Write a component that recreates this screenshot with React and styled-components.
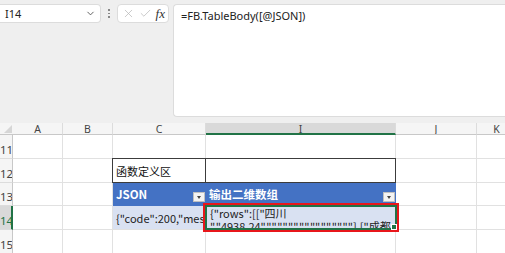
import React from "react";
import styled, { createGlobalStyle } from "styled-components";
import { ChevronDown, X, Check } from "lucide-react";

const GlobalStyle = createGlobalStyle`
  html, body {
    margin: 0;
    padding: 0;
    background: #efefef;
  }
  body {
    font-family: "Noto Sans", "Noto Sans CJK SC", sans-serif;
    overflow: hidden;
  }
`;

const columns = [
  { key: "A", width: 50 },
  { key: "B", width: 50 },
  { key: "C", width: 93 },
  { key: "I", width: 190, active: true },
  { key: "J", width: 81 },
  { key: "K", width: 40 },
];

const rows = [
  { num: 11, height: 24 },
  { num: 12, height: 24 },
  { num: 13, height: 23 },
  { num: 14, height: 24, active: true },
  { num: 15, height: 24 },
];

const App = () => {
  return (
    <Wrapper>
      <GlobalStyle />
      <TopBar>
        <NameBox>
          <span>I14</span>
          <ChevronDown size={11} strokeWidth={2} color="#555" />
        </NameBox>
        <Grip>
          <i />
          <i />
          <i />
        </Grip>
        <FormulaTools>
          <X size={13} strokeWidth={1.3} color="#b5b5b5" />
          <Check size={13} strokeWidth={1.3} color="#b5b5b5" />
          <Fx>fx</Fx>
        </FormulaTools>
        <FormulaBar>=FB.TableBody([@JSON])</FormulaBar>
      </TopBar>

      <Sheet>
        <Corner>
          <svg width="10" height="10" viewBox="0 0 10 10">
            <path d="M9 1 L9 9 L1 9 Z" fill="#d6d6d6" />
          </svg>
        </Corner>
        {columns.map((c) => (
          <ColHeader key={c.key} $active={c.active}>
            {c.key}
          </ColHeader>
        ))}

        {rows.map((r) => (
          <React.Fragment key={r.num}>
            <RowHeader $active={r.active} $h={r.height}>
              {r.num}
            </RowHeader>
            <Cell />
            <Cell />
            {r.num === 12 && (
              <>
                <Cell $boxed>函数定义区</Cell>
                <Cell $boxed />
              </>
            )}
            {r.num === 13 && (
              <>
                <HeadCell>
                  JSON
                  <FilterBtn />
                </HeadCell>
                <HeadCell>
                  输出二维数组
                  <FilterBtn />
                </HeadCell>
              </>
            )}
            {r.num === 14 && (
              <>
                <BandCell>
                  <CellText>{'{"code":200,"message":"success"}'}</CellText>
                </BandCell>
                <BandCell>
                  <CellText $wrap>
                    {'{"rows":[["四川'}
                    <br />
                    {'","4938.24","","","","","","","",""],["成都'}
                  </CellText>
                  <Selection>
                    <Handle />
                  </Selection>
                </BandCell>
              </>
            )}
            {(r.num === 11 || r.num === 15) && (
              <>
                <Cell />
                <Cell />
              </>
            )}
            <Cell />
            <Cell />
          </React.Fragment>
        ))}
      </Sheet>
    </Wrapper>
  );
};

const Wrapper = styled.div`
  width: 505px;
  height: 253px;
  overflow: hidden;
  display: flex;
  flex-direction: column;
`;

const TopBar = styled.div`
  flex-shrink: 0;
  height: 123px;
  box-sizing: border-box;
  padding-top: 4px;
  display: flex;
  align-items: flex-start;
`;

const NameBox = styled.div`
  width: 101px;
  height: 19px;
  box-sizing: border-box;
  background: #fff;
  border: 1px solid #dcdcdc;
  border-left: none;
  border-radius: 0 4px 4px 0;
  display: flex;
  align-items: center;
  justify-content: space-between;
  padding: 0 4px 0 5px;
  font-size: 11px;
  color: #222;
`;

const Grip = styled.div`
  width: 16px;
  height: 19px;
  display: flex;
  flex-direction: column;
  align-items: center;
  justify-content: center;
  gap: 2px;

  i {
    width: 1.5px;
    height: 1.5px;
    background: #888;
  }
`;

const FormulaTools = styled.div`
  width: 52px;
  height: 19px;
  box-sizing: border-box;
  background: #fff;
  border: 1px solid #dcdcdc;
  border-radius: 4px;
  display: flex;
  align-items: center;
  justify-content: space-between;
  padding: 0 3px 0 4px;
`;

const Fx = styled.span`
  font-family: "Liberation Serif", serif;
  font-style: italic;
  font-size: 13px;
  color: #333;
  line-height: 1;
`;

const FormulaBar = styled.div`
  flex: 1;
  margin-left: 4px;
  height: 113px;
  box-sizing: border-box;
  background: #fff;
  border: 1px solid #dcdcdc;
  border-right: none;
  border-radius: 4px 0 0 4px;
  padding: 3px 7px;
  font-size: 11px;
  color: #222;
`;

const Sheet = styled.div`
  flex-shrink: 0;
  display: grid;
  grid-template-columns: 13px ${columns.map((c) => `${c.width}px`).join(" ")};
  background: #fff;
  font-family: "Noto Sans CJK SC", "Noto Sans", sans-serif;
  font-size: 11px;
`;

const Corner = styled.div`
  height: 12px;
  background: #f5f5f5;
  border-bottom: 1px solid #c8c8c8;
  display: flex;
  align-items: flex-end;
  justify-content: flex-end;
  box-sizing: border-box;
`;

const ColHeader = styled.div`
  height: 12px;
  box-sizing: border-box;
  background: ${(p) => (p.$active ? "#d9d9d9" : "#f5f5f5")};
  border-right: 1px solid #dcdcdc;
  border-bottom: ${(p) => (p.$active ? "2px solid #217346" : "1px solid #c8c8c8")};
  color: #444;
  font-family: "Noto Sans", sans-serif;
  font-size: 10.5px;
  line-height: 12px;
  text-align: center;
  overflow: hidden;
`;

const RowHeader = styled.div`
  height: ${(p) => p.$h}px;
  box-sizing: border-box;
  background: ${(p) => (p.$active ? "#d9d9d9" : "#f5f5f5")};
  border-bottom: 1px solid #dcdcdc;
  border-right: ${(p) => (p.$active ? "2px solid #217346" : "1px solid #c8c8c8")};
  color: ${(p) => (p.$active ? "#217346" : "#444")};
  font-family: "Noto Sans", sans-serif;
  font-size: 11.5px;
  display: flex;
  align-items: flex-end;
  justify-content: flex-end;
  padding: 0 4px 1px 0;
  overflow: hidden;
  direction: rtl;
`;

const Cell = styled.div`
  box-sizing: border-box;
  border-right: 1px solid #e1e1e1;
  border-bottom: 1px solid #e1e1e1;
  ${(p) =>
    p.$boxed &&
    `
    border: 1px solid #3c3c3c;
    margin: -1px 0 0 -1px;
  `}
  display: flex;
  align-items: center;
  padding: 0 3px;
  color: #111;
  white-space: nowrap;
  overflow: hidden;
  font-size: 11px;
`;

const HeadCell = styled.div`
  position: relative;
  background: #4472c4;
  color: #fff;
  font-weight: bold;
  display: flex;
  align-items: center;
  padding: 0 3px;
  font-size: 11.5px;
  border-bottom: 1px solid #4472c4;
  box-sizing: border-box;
`;

const FilterBtn = styled.span`
  position: absolute;
  right: 1px;
  bottom: 3px;
  width: 12px;
  height: 10px;
  box-sizing: border-box;
  background: #f3f3f3;
  border: 1px solid #c0c0c0;

  &::after {
    content: "";
    position: absolute;
    left: 3px;
    top: 3px;
    border-left: 2.5px solid transparent;
    border-right: 2.5px solid transparent;
    border-top: 3px solid #444;
  }
`;

const BandCell = styled.div`
  position: relative;
  height: 24px;
  box-sizing: border-box;
  background: #d9e1f2;
  border-bottom: 1px solid #e1e1e1;
  color: #222;
`;

const CellText = styled.div`
  height: 100%;
  box-sizing: border-box;
  overflow: hidden;
  white-space: nowrap;
  padding: ${(p) => (p.$wrap ? "1px 4px 0" : "0 3px")};
  line-height: ${(p) => (p.$wrap ? "13px" : "24px")};
  font-size: 11px;
`;

const Selection = styled.div`
  position: absolute;
  inset: -3px;
  border: 2px solid #e8161b;
  box-shadow: inset 0 0 0 2px #217346;
  pointer-events: none;
`;

const Handle = styled.span`
  position: absolute;
  right: 0;
  bottom: 0;
  width: 4px;
  height: 4px;
  background: #217346;
  border: 1px solid #fff;
`;

export default App;
